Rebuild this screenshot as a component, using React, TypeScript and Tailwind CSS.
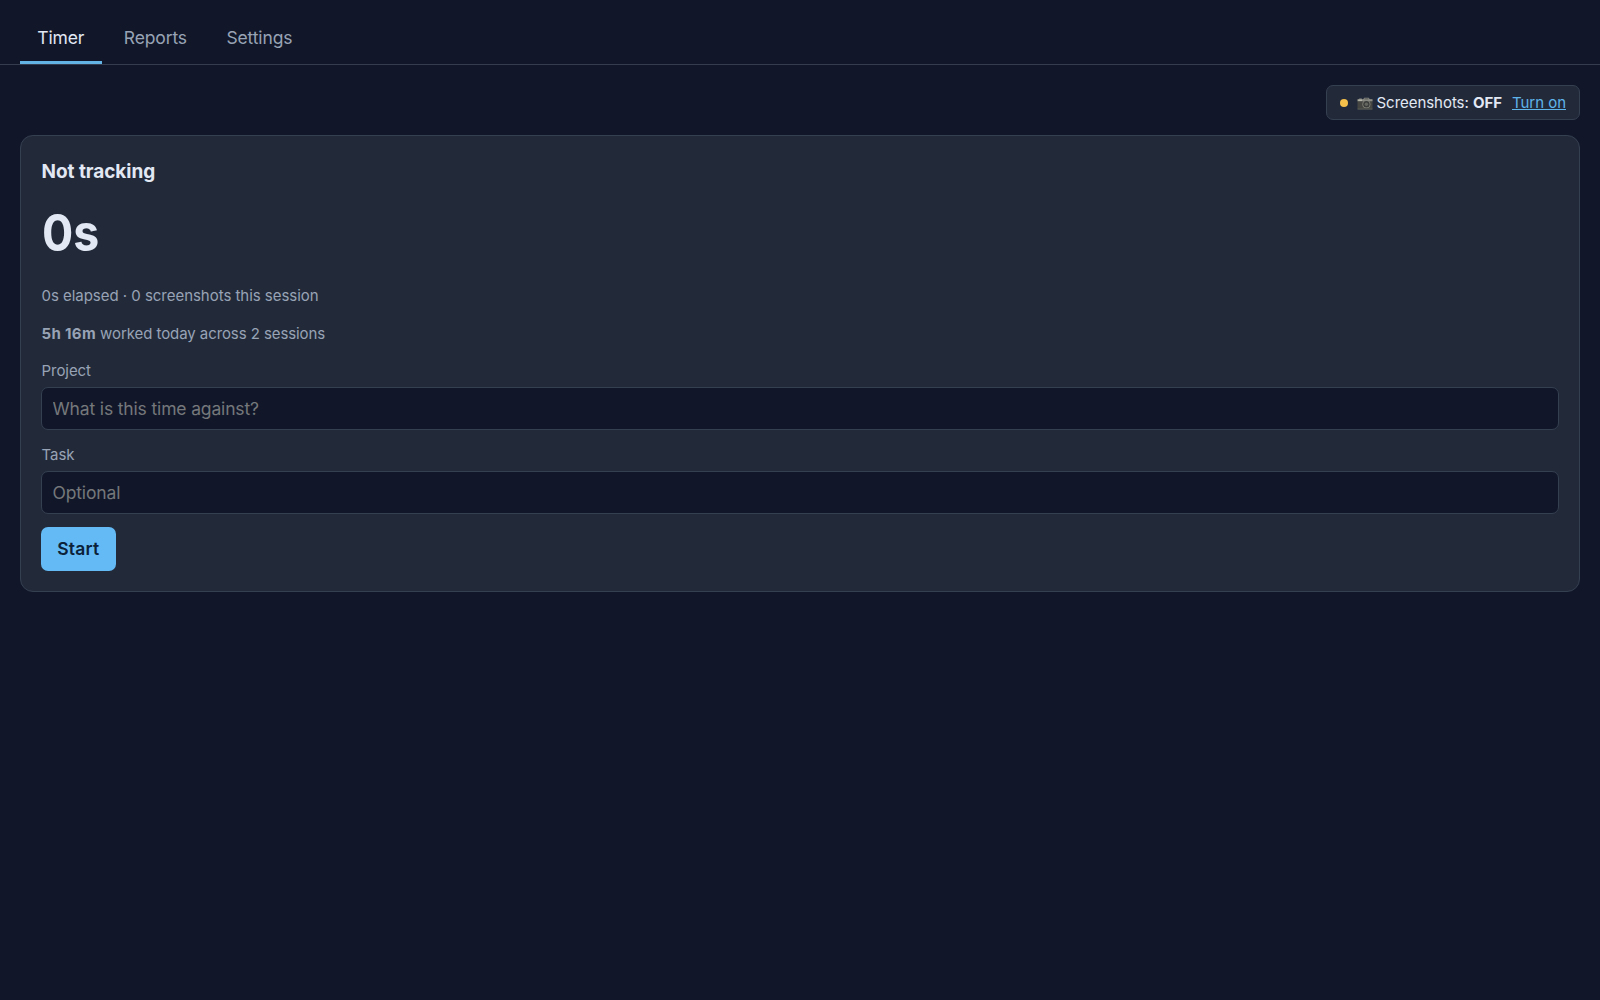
import { useState } from 'react';
import clsx from 'clsx';

const TABS = ['Timer', 'Reports', 'Settings'];

function CameraIcon() {
  return (
    <svg className="w-4 h-[13px] mt-px shrink-0" viewBox="0 0 16 13">
      <rect x="0.5" y="2" width="15" height="10.5" rx="0.8" fill="#454642" />
      <path d="M0.5 4.2V2.2h1.4l.4-.7h2.4l.4.7h1.1L7.3.8h4.4l1.1 1.4h2.7v2z" fill="#8d8e86" />
      <rect x="7.4" y="1.2" width="4.1" height="1.3" fill="#5f605c" />
      <rect x="1.2" y="2.7" width="3.8" height="1.3" fill="#b4b4a8" />
      <circle cx="9.4" cy="7.3" r="4" fill="#84857b" />
      <circle cx="9.4" cy="7.3" r="3.2" fill="#3a3d3b" />
      <circle cx="9.4" cy="7.3" r="1.7" fill="#62665f" />
      <rect x="0.5" y="11.6" width="15" height="0.9" fill="#5b5c57" />
    </svg>
  );
}

interface FieldProps {
  label: string;
  placeholder: string;
  value: string;
  onChange: (value: string) => void;
}

function Field({ label, placeholder, value, onChange }: FieldProps) {
  return (
    <label className="block mb-[13px] text-[15px] leading-6 tracking-[-0.05px] text-[#98a3b5]">
      <span className="pl-[0.5px]">{label}</span>
      <input
        className="block w-full h-[43px] mt-1 px-[10.5px] rounded-[7px] border border-[#343f50] bg-[#111729] text-[17.5px] tracking-[-0.15px] text-[#e2e8f4] placeholder:text-[#75777b] outline-none"
        placeholder={placeholder}
        value={value}
        onChange={(e) => onChange(e.target.value)}
      />
    </label>
  );
}

export default function App() {
  const [tab, setTab] = useState('Timer');
  const [screenshots, setScreenshots] = useState(false);
  const [project, setProject] = useState('');
  const [task, setTask] = useState('');

  return (
    <div className="min-h-screen bg-[#111729] font-['Inter',sans-serif] text-[#e2e8f4]">
      <nav className="flex gap-[5px] h-[65px] px-5 pt-3 border-b border-[#343c4e]">
        {TABS.map((name) => (
          <button
            key={name}
            onClick={() => setTab(name)}
            className={clsx(
              'h-[52px] px-[17.25px] pt-1 border-b-[3px] text-[17.5px] tracking-[-0.13px]',
              tab === name ? 'border-[#63b3e4] text-[#e2e8f4]' : 'border-transparent text-[#98a3b5]'
            )}
          >
            {name}
          </button>
        ))}
      </nav>

      <main className="px-5 pt-5">
        <div className="flex justify-end mb-[15px]">
          <div className="flex items-center h-[35px] px-[13px] rounded-[7px] border border-[#343f50] bg-[#222a3a] text-[15px] tracking-[-0.04px]">
            <span className="w-2 h-2 mr-[9px] rounded-full bg-[#f5c14b]" />
            <CameraIcon />
            <span className="ml-1 pt-[2px]">
              Screenshots: <strong>{screenshots ? 'ON' : 'OFF'}</strong>
            </span>
            <button
              className="ml-[10px] pt-[2px] text-[#5fb4ea] underline"
              onClick={() => setScreenshots(!screenshots)}
            >
              {screenshots ? 'Turn off' : 'Turn on'}
            </button>
          </div>
        </div>

        <section className="h-[457px] px-5 pt-[22px] rounded-[13px] border border-[#343f50] bg-[#222a3a]">
          <h2 className="pl-[0.5px] text-[19px] leading-7 font-bold tracking-[-0.05px]">Not tracking</h2>
          <div className="mt-[12px] ml-[0.5px] origin-left scale-x-[0.91] text-[51px] leading-[70px] font-bold">
            0s
          </div>
          <p className="mt-4 pl-[0.5px] text-[15px] leading-6 tracking-[-0.03px] text-[#98a3b5]">
            0s elapsed · 0 screenshots this session
          </p>
          <p className="mt-[14px] mb-[13px] pl-[0.5px] text-[15px] leading-6 tracking-[-0.08px] text-[#98a3b5]">
            <strong className="tracking-[0.35px]">5h 16m</strong> worked today across 2 sessions
          </p>
          <Field
            label="Project"
            placeholder="What is this time against?"
            value={project}
            onChange={setProject}
          />
          <Field label="Task" placeholder="Optional" value={task} onChange={setTask} />
          <button className="h-11 px-[16.25px] rounded-[7px] bg-[#63baf4] text-[17.5px] font-semibold tracking-[0.2px] text-[#0b2239]">
            Start
          </button>
        </section>
      </main>
    </div>
  );
}
